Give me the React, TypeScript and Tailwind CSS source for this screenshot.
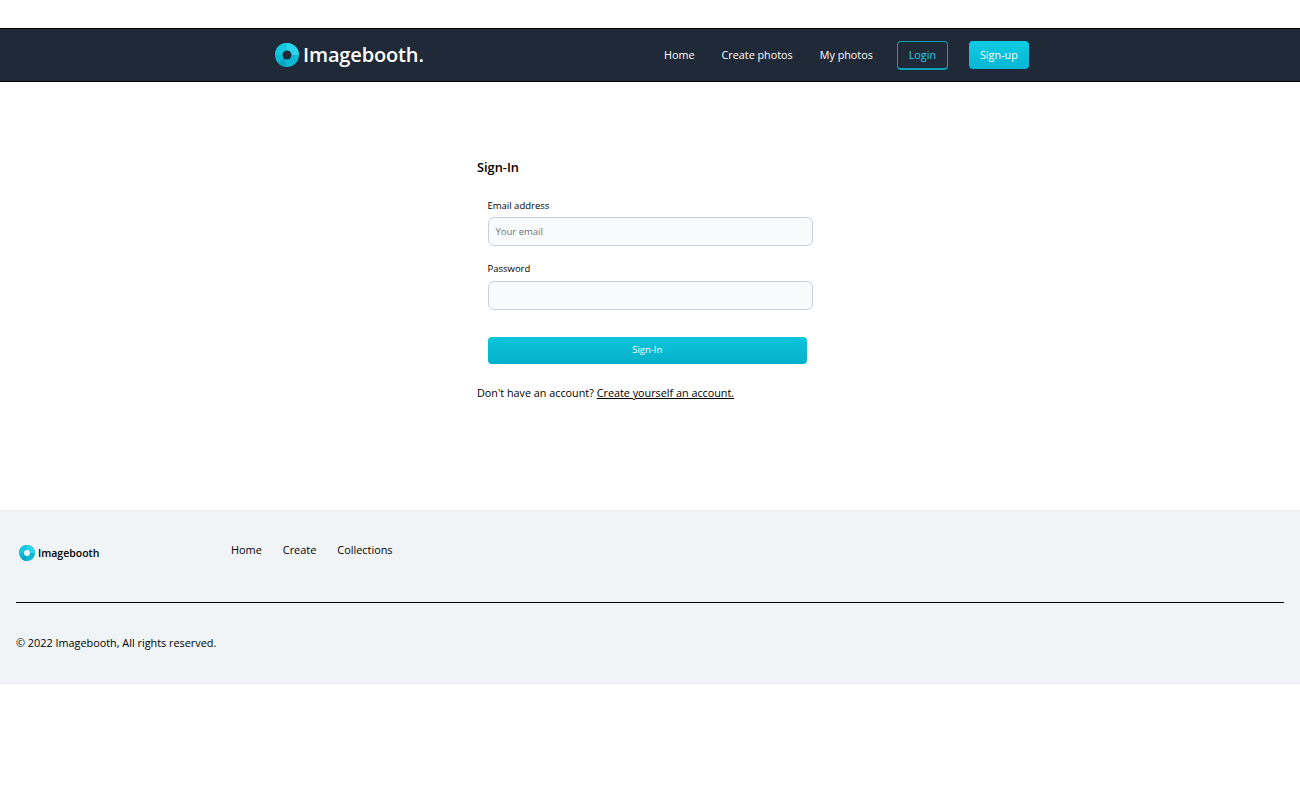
const Logo = ({ size, hole }: { size: number; hole: string }) => (
  <svg width={size} height={size} viewBox="0 0 24 24" className="shrink-0">
    <circle cx="12" cy="12" r="12" fill="#08b8d4" />
    <path d="M12 0A12 12 0 0 1 24 12L16 12A4 4 0 0 0 12 8Z" fill="#2ad4ea" />
    <path d="M2 5A12 12 0 0 1 12 0L12 8A4 4 0 0 0 8 12L0 12A12 12 0 0 1 2 5Z" fill="#14c6e0" />
    <path d="M12 24A12 12 0 0 1 4 21L9 15Z" fill="#0aa3c0" />
    <circle cx="12" cy="12" r="4.5" fill={hole} />
  </svg>
);

export default function App() {
  return (
    <div className="font-['Open_Sans',sans-serif] bg-white min-h-[788px] pt-7 text-black">
      <nav className="h-[54px] bg-[#1f2937] border-y border-black flex items-center">
        <div className="ml-[275px] w-[148px] flex items-center gap-1">
          <Logo size={24} hole="#1f2937" />
          <span className="text-[20px] text-white font-semibold leading-none tracking-[-0.15px]">Imagebooth.</span>
        </div>
        <div className="ml-[241px] flex items-center text-[10.8px] font-medium text-white">
          <a className="mr-[27px]">Home</a>
          <a className="mr-[27px]">Create photos</a>
          <a className="mr-6">My photos</a>
          <a className="w-[51px] h-[29px] pt-px mr-[21px] flex items-center justify-center rounded border border-[#0e9fb5] border-b-2 text-[#22d3ee]">Login</a>
          <a className="w-[60px] h-[28px] flex items-center justify-center rounded bg-gradient-to-b from-[#0ecbe4] to-[#06b6d4]">Sign-up</a>
        </div>
      </nav>
      <main className="h-[428px] pt-[76px] pl-[477px]">
        <h1 className="text-[12.8px] font-semibold leading-[18px]">Sign-In</h1>
        <form className="pl-[10.5px] pt-[23px]">
          <label className="block text-[9.5px] font-medium leading-[14px]">Email address</label>
          <div className="mt-[4px] w-[325px] h-[29px] pt-px rounded-md border border-[#cbd0da] bg-[#f9fafb] px-[7px] flex items-center text-[9.5px] text-gray-500">Your email</div>
          <label className="block mt-[16px] text-[9.5px] font-medium leading-[14px]">Password</label>
          <div className="mt-[5px] w-[325px] h-[29px] rounded-md border border-[#cbd0da] bg-[#f9fafb]" />
          <button type="button" className="mt-[27px] w-[319.5px] h-[27px] rounded bg-gradient-to-b from-[#0ec5dd] to-[#04b0c9] text-white text-[9.5px] font-medium flex items-center justify-center">Sign-In</button>
        </form>
        <p className="mt-[21px] text-[10.8px] leading-4">Don't have an account? <a className="underline font-medium">Create yourself an account.</a></p>
      </main>
      <footer className="h-[174px] bg-[#f0f4f7] border-y border-[#e9edf1] px-4">
        <div className="flex h-[92px] border-b border-black">
          <div className="flex items-center gap-[3px] ml-[3px] w-[212px] self-start mt-[34px]">
            <Logo size={16} hole="#eef4f7" />
            <span className="text-[10.5px] font-semibold pt-px">Imagebooth</span>
          </div>
          <div className="flex gap-[21px] text-[10.9px] mt-[31px] h-4 leading-4">
            <a>Home</a>
            <a>Create</a>
            <a>Collections</a>
          </div>
        </div>
        <p className="mt-[32px] text-[10.85px] leading-4">© 2022 Imagebooth, All rights reserved.</p>
      </footer>
    </div>
  );
}
